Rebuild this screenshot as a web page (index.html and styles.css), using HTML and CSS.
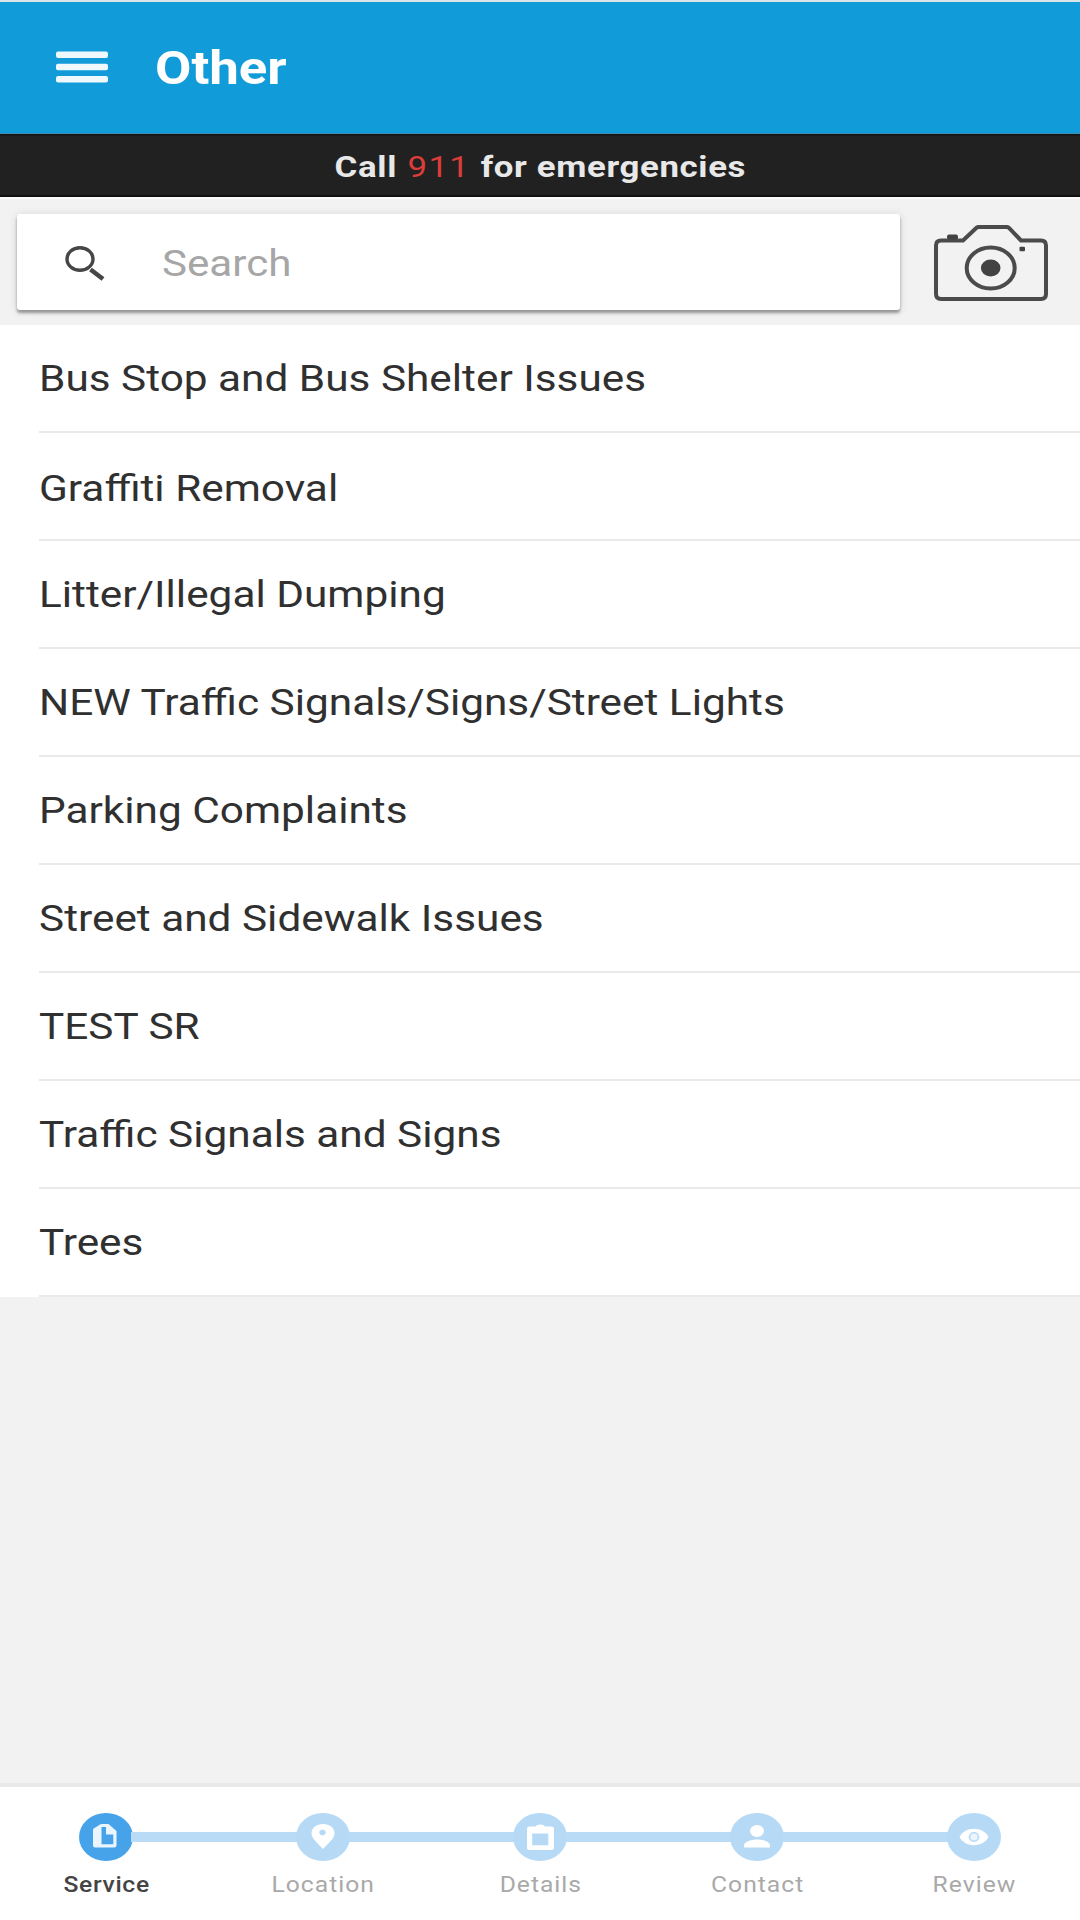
FILE: index.html
```html
<!DOCTYPE html>
<html lang="en">
<head>
<meta charset="utf-8">
<title>Other</title>
<link rel="stylesheet" href="styles.css">
</head>
<body>
<div class="app">
  <header class="topbar">
    <svg class="menu-icon" viewBox="0 0 54 34" aria-label="Menu">
      <rect x="1" y="1.6" width="52" height="6.500" rx="2"/>
      <rect x="1" y="13.800" width="52" height="6.500" rx="2"/>
      <rect x="1" y="26" width="52" height="6.500" rx="2"/>
    </svg>
    <h1 class="title">Other</h1>
  </header>

  <div class="emergency"><p class="emergency-text"><span>Call</span><span class="number">911</span><span>for emergencies</span></p></div>

  <section class="searchbar">
    <div class="search-field">
      <svg class="search-icon" viewBox="0 0 42 36">
        <ellipse cx="16" cy="14" rx="13" ry="11.3"/>
        <path class="handle" d="M26.500 24.500L39 34"/>
      </svg>
      <span class="placeholder">Search</span>
    </div>
    <svg class="camera-icon" viewBox="0 0 116 77">
      <path class="outline" d="M8 15.5H30L43.500 2.800Q44.500 1.900 46 1.900H73Q75 1.900 76 2.900L88 15.500H108Q113 15.500 113 20.500V69Q113 74 108 74H8Q3 74 3 69V20.500Q3 15.500 8 15.500Z"/>
      <ellipse class="outline" cx="57.700" cy="43" rx="24" ry="20.500"/>
      <ellipse class="solid" cx="57.700" cy="43" rx="9.800" ry="8.500"/>
      <rect class="solid" x="14" y="9.500" width="11" height="5" rx="2"/>
      <rect class="solid" x="86.500" y="21.800" width="5.500" height="4.500" rx="1"/>
    </svg>
  </section>

  <main class="content">
    <ul class="services">
      <li><span>Bus Stop and Bus Shelter Issues</span></li>
      <li><span>Graffiti Removal</span></li>
      <li><span>Litter/Illegal Dumping</span></li>
      <li><span>NEW Traffic Signals/Signs/Street Lights</span></li>
      <li><span>Parking Complaints</span></li>
      <li><span>Street and Sidewalk Issues</span></li>
      <li><span>TEST SR</span></li>
      <li><span>Traffic Signals and Signs</span></li>
      <li><span>Trees</span></li>
    </ul>
  </main>

  <nav class="stepper">
    <div class="step active">
      <svg class="badge" viewBox="0 0 54 48">
        <ellipse class="disc" cx="27" cy="24" rx="27" ry="24"/>
        <path class="glyph" fill-rule="evenodd" d="M19.500 12.500Q20.500 11 23 11H29.500L37.500 18V32Q37.500 34.500 35 34.500H16Q14 34.500 14 32.500V17Q14 15 16 14.800ZM22.500 14V31.300H34.300V21.500H27V14Z"/>
      </svg>
      <span class="label">Service</span>
    </div>
    <div class="step">
      <svg class="badge" viewBox="0 0 54 48">
        <ellipse class="disc" cx="27" cy="24" rx="27" ry="24"/>
        <path class="glyph" fill-rule="evenodd" d="M27 36C22 30.500 15.500 25.500 15.500 20.500C15.500 14.800 20.500 11 27 11S38.500 14.800 38.500 20.500C38.500 25.500 32 30.500 27 36ZM26.500 16.500A3.200 3 0 1 0 26.510 16.500Z"/>
      </svg>
      <span class="label">Location</span>
    </div>
    <div class="step">
      <svg class="badge" viewBox="0 0 54 48">
        <ellipse class="disc" cx="27" cy="24" rx="27" ry="24"/>
        <path class="glyph" fill-rule="evenodd" d="M16.500 13.500H22.800C23.500 10.800 31.200 10.800 31.900 13.500H38.500Q41 13.500 41 16V34.500Q41 37 38.500 37H16.500Q14 37 14 34.500V16Q14 13.500 16.500 13.500ZM19.200 20.500V32.300H35.300V20.500Z"/>
      </svg>
      <span class="label">Details</span>
    </div>
    <div class="step">
      <svg class="badge" viewBox="0 0 54 48">
        <ellipse class="disc" cx="27" cy="24" rx="27" ry="24"/>
        <ellipse class="glyph" cx="27" cy="18" rx="7" ry="6"/>
        <path class="glyph" d="M14 34.500V32.500C14 28.500 22 26.500 27 26.500S40 28.500 40 32.500V34.500Z"/>
      </svg>
      <span class="label">Contact</span>
    </div>
    <div class="step">
      <svg class="badge" viewBox="0 0 54 48">
        <ellipse class="disc" cx="27" cy="24" rx="27" ry="24"/>
        <path class="glyph" d="M12.500 24C15 19 20.500 15.800 27 15.800S39 19 41.500 24C39 29 33.500 32.200 27 32.200S15 29 12.500 24Z"/>
        <ellipse class="iris" cx="27" cy="24" rx="4.600" ry="4.200"/>
      </svg>
      <span class="label">Review</span>
    </div>
  </nav>
</div>
</body>
</html>
```
FILE: styles.css
```css
* { box-sizing: border-box; }

body {
  margin: 0;
  background: #f2f2f2;
  font-family: Roboto, sans-serif;
  color: #303030;
}

.app {
  display: flex;
  flex-direction: column;
  width: 1080px;
  height: 1920px;
}

.topbar {
  display: flex;
  align-items: center;
  gap: 46px;
  height: 134px;
  padding: 1px 55px 0;
  border-top: 2px solid #dde4e8;
  border-bottom: 1px solid #3d8bb0;
  background: #119bd9;
}

.menu-icon {
  width: 54px;
  height: 34px;
  margin-top: -3px;
  fill: #eef8fd;
}

.title {
  margin: 0;
  font-size: 46px;
  font-weight: 700;
  line-height: 60px;
  color: #fff;
  transform: scaleX(1.148);
  transform-origin: left;
}

.emergency {
  display: flex;
  align-items: center;
  justify-content: center;
  height: 63px;
  border-top: 2px solid #171717;
  border-bottom: 2px solid #111;
  background: #212121;
}

.emergency-text {
  display: flex;
  gap: 9px;
  margin: 1px 0 0;
  font-size: 30px;
  font-weight: 700;
  letter-spacing: 0.55px;
  color: #e8e8e8;
  transform: scaleX(1.16);
}

.number {
  font-weight: 400;
  letter-spacing: 1.2px;
  color: #dc3d38;
}

.searchbar {
  display: flex;
  align-items: center;
  justify-content: space-between;
  height: 128px;
  padding: 2px 31px 0 17px;
  border-top: 2px solid #fafafa;
}

.search-field {
  display: flex;
  align-items: center;
  gap: 56px;
  width: 883px;
  height: 96px;
  margin-top: -2px;
  padding: 3px 47px 0;
  border-radius: 3px;
  background: #fff;
  box-shadow: 0 3px 3px rgba(0, 0, 0, 0.34), 0 1px 10px rgba(0, 0, 0, 0.12);
}

.search-icon {
  width: 42px;
  height: 36px;
  margin-top: -2px;
  fill: none;
  stroke: #464646;
  stroke-width: 3.4;
}

.search-icon .handle { stroke-width: 4.6; }

.placeholder {
  font-size: 36px;
  color: #a6a6a6;
  transform: scaleX(1.17);
  transform-origin: left;
}

.camera-icon {
  width: 116px;
  height: 77px;
  margin-top: 1px;
}

.camera-icon .outline {
  fill: none;
  stroke: #4b4b4b;
  stroke-width: 4;
}

.camera-icon .solid { fill: #424242; }

.content { flex: 1; }

.services {
  margin: 0;
  padding: 0;
  list-style: none;
  background: #fff;
}

.services li {
  display: flex;
  align-items: center;
  height: 108px;
  margin-left: 39px;
  padding-top: 2px;
  border-bottom: 2px solid #ebebeb;
  font-size: 36px;
}

.services li:nth-child(2) { padding-top: 5px; }

.services span {
  white-space: nowrap;
  transform: scaleX(1.176);
  transform-origin: left;
}

.stepper {
  display: grid;
  grid-template-columns: repeat(5, 217px);
  justify-content: center;
  height: 137px;
  padding-top: 26px;
  border-top: 4px solid #e9e9e9;
  background: #fff;
}

.step {
  display: flex;
  flex-direction: column;
  align-items: center;
  gap: 9px;
  position: relative;
}

/* Connector between this step's badge and the next one */
.step:not(:last-child)::after {
  content: "";
  position: absolute;
  top: 19px;
  left: 133px;
  width: 167px;
  height: 10px;
  background: #b9dbf5;
}

.badge {
  width: 54px;
  height: 48px;
}

.disc { fill: #b6daf6; }
.active .disc { fill: #46a3ea; }
.glyph { fill: #fff; }
.active .glyph { fill: #eaf5fd; }

.iris {
  fill: #e9f4fc;
  stroke: #b6daf6;
  stroke-width: 1.6;
}

.label {
  padding-left: 1px;
  font-size: 22px;
  line-height: 30px;
  letter-spacing: 0.9px;
  color: #a9a9a9;
  transform: scaleX(1.12);
}

.active .label {
  font-weight: 500;
  letter-spacing: 0.6px;
  color: #444;
}
```
